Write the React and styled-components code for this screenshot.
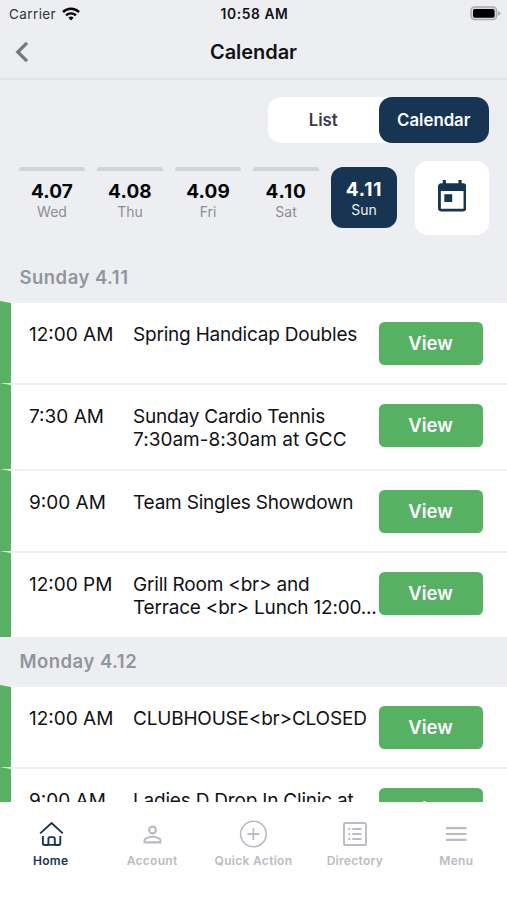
import React from "react";
import styled, { createGlobalStyle } from "styled-components";
import { MdPersonOutline } from "react-icons/md";

const NAVY = "#173453";
const GREEN = "#56b163";
const SURFACE = "#edeef2";
const MUTED = "#b9bcc2";

const GlobalStyle = createGlobalStyle`
  *, *::before, *::after { box-sizing: border-box; }
  body { margin: 0; background: #fff; }
  button { font: inherit; border: 0; padding: 0; cursor: pointer; }
`;

const Screen = styled.div`
  display: flex;
  flex-direction: column;
  width: 507px;
  height: 900px;
  overflow: hidden;
  background: ${SURFACE};
  color: #111214;
  font-family: Inter, "Liberation Sans", sans-serif;
`;

const StatusBar = styled.div`
  display: grid;
  grid-template-columns: 1fr auto 1fr;
  align-items: center;
  height: 27px;
  padding: 0 6px 0 9px;
  flex: none;
`;

const Carrier = styled.div`
  display: flex;
  align-items: center;
  gap: 6px;
  font-size: 13.5px;
  letter-spacing: 0.4px;
  color: #333437;
`;

const Clock = styled.div`
  margin-left: -1px;
  font-size: 13.8px;
  font-weight: 600;
  letter-spacing: 0.6px;
`;

const BatteryIcon = styled.svg`
  justify-self: end;
`;

const TitleBar = styled.header`
  display: grid;
  grid-template-columns: 60px 1fr 60px;
  align-items: center;
  height: 53px;
  padding-bottom: 2px;
  border-bottom: 2px solid #e2e3e6;
  flex: none;
`;

const BackButton = styled.button`
  display: flex;
  align-items: center;
  height: 40px;
  padding-left: 15px;
  background: none;
`;

const Title = styled.h1`
  margin: 0;
  text-align: center;
  font-size: 20px;
  font-weight: 600;
  letter-spacing: -0.05px;
`;

const Filters = styled.section`
  height: 173px;
  padding: 17px 18px 0 19px;
  flex: none;
`;

const Segmented = styled.div`
  display: flex;
  width: 221px;
  height: 46px;
  margin-left: auto;
  border-radius: 13px;
  background: #fff;
`;

const Segment = styled.button`
  flex: 1;
  border-radius: 13px;
  background: ${(p) => (p.$active ? NAVY : "transparent")};
  color: ${(p) => (p.$active ? "#fff" : "#383b42")};
  font-size: 16.8px;
  font-weight: 600;
`;

const DateStrip = styled.div`
  display: flex;
  justify-content: space-between;
  align-items: flex-start;
  margin-top: 18px;
`;

const Days = styled.div`
  display: flex;
  gap: 12px;
  padding-top: 6px;
`;

const Day = styled.button`
  display: flex;
  flex-direction: column;
  align-items: center;
  width: 66px;
  height: 61px;
  padding-top: ${(p) => (p.$active ? "12px" : "10px")};
  border-top: ${(p) => (p.$active ? "0" : "4px solid #d2d3d6")};
  border-radius: ${(p) => (p.$active ? "12px" : "3px 3px 0 0")};
  background: ${(p) => (p.$active ? NAVY : "transparent")};
  color: ${(p) => (p.$active ? "#fff" : "#060607")};
`;

const DayDate = styled.span`
  font-size: 19px;
  line-height: 22px;
  font-weight: 700;
  letter-spacing: ${(p) => (p.$loose ? "0.8px" : "0.15px")};
`;

const DayName = styled.span`
  margin-top: -1px;
  font-size: 14px;
  line-height: 20px;
  color: ${(p) => (p.$active ? "#eef1f5" : "#8c8d92")};
`;

const PickerButton = styled.button`
  display: grid;
  place-items: center;
  width: 74px;
  height: 74px;
  padding-bottom: 4px;
  border-radius: 13px;
  background: #fff;
`;

const Agenda = styled.main`
  height: 549px;
  overflow: hidden;
  flex: none;
`;

const SectionTitle = styled.h2`
  margin: 0;
  height: 48px;
  padding-left: 19.5px;
  font-size: 18.5px;
  font-weight: 600;
  line-height: 48px;
  letter-spacing: 0.48px;
  color: #93959c;
`;

const EventRow = styled.article`
  display: grid;
  grid-template-columns: 104px 245.5px 1fr;
  align-items: start;
  height: ${(p) => (p.$tall ? "86px" : "82px")};
  padding: 18.5px 24px 0 18px;
  border-left: 11px solid ${GREEN};
  border-top: 2px solid #f1f1f3;
  background: #fff;
  background-clip: padding-box;
  font-size: 19px;
  line-height: 23.4px;
`;

const Time = styled.time`
  padding-top: 1px;
  white-space: nowrap;
`;

const EventName = styled.div`
  padding-top: 1px;
`;

const NameLine = styled.span`
  display: block;
  white-space: nowrap;
  letter-spacing: ${(p) => (p.$numeric ? "0.02px" : "-0.2px")};
`;

const ViewButton = styled.button`
  width: 104px;
  height: 43px;
  padding-top: 2px;
  border-radius: 5.5px;
  background: ${GREEN};
  color: #fff;
  font-size: 18.5px;
  font-weight: 600;
`;

const TabBar = styled.nav`
  display: grid;
  grid-template-columns: repeat(5, 1fr);
  height: 98px;
  background: #fff;
  flex: none;
`;

const Tab = styled.a`
  display: flex;
  flex-direction: column;
  align-items: center;
  padding-top: 18px;
  gap: 4px;
  color: ${(p) => (p.$active ? NAVY : MUTED)};
  font-size: 12px;
  font-weight: 600;
  line-height: 18px;
  letter-spacing: 0.3px;
  white-space: nowrap;
`;

const TabIcon = styled.span`
  display: grid;
  place-items: center;
  width: 28px;
  height: 28px;
`;

const LineIcon = ({ children }) => (
  <svg width="28" height="28" viewBox="0 0 28 28" fill="none" stroke="currentColor" strokeWidth="1.6">
    {children}
  </svg>
);

const HomeIcon = () => (
  <LineIcon>
    <path d="M3.2 13.4 14.6 3l11.2 10.4" strokeWidth="1.9" />
    <path
      d="M5.9 16v7.3q0 1.7 1.7 1.7h2.2q1.6 0 1.6-1.6v-4.6q0-1.7 1.7-1.7h3q1.7 0 1.7 1.7v4.6q0 1.6 1.6 1.6h2.2q1.7 0 1.7-1.7v-7.3M11.5 24.9h6.2"
      strokeWidth="1.9"
    />
  </LineIcon>
);

const AddIcon = () => (
  <LineIcon>
    <circle cx="14.4" cy="14" r="12.8" />
    <path d="M14.4 8v12M8.4 14h12" strokeWidth="1.8" />
  </LineIcon>
);

const DirectoryIcon = () => (
  <LineIcon>
    <rect x="3" y="3" width="22" height="22" rx="1" strokeWidth="1.9" />
    <path d="M7.3 9h2M7.3 14h2M7.3 19h2M11.3 9h9.2M11.3 14h9.2M11.3 19h9.2" strokeWidth="1.8" />
  </LineIcon>
);

const MenuIcon = () => (
  <LineIcon>
    <path d="M3.9 8.2h20.6M3.9 14h20.6M3.9 19.8h20.6" strokeWidth="2.2" />
  </LineIcon>
);

const DAYS = [
  ["4.07", "Wed"],
  ["4.08", "Thu"],
  ["4.09", "Fri"],
  ["4.10", "Sat"],
  ["4.11", "Sun"],
];

const SECTIONS = [
  {
    title: "Sunday 4.11",
    events: [
      { time: "12:00 AM", name: ["Spring Handicap Doubles"] },
      { time: "7:30 AM", name: ["Sunday Cardio Tennis", "7:30am-8:30am at GCC"] },
      { time: "9:00 AM", name: ["Team Singles Showdown"] },
      { time: "12:00 PM", name: ["Grill Room <br> and", "Terrace <br> Lunch 12:00..."] },
    ],
  },
  {
    title: "Monday 4.12",
    events: [
      { time: "12:00 AM", name: ["CLUBHOUSE<br>CLOSED"] },
      { time: "9:00 AM", name: ["Ladies D Drop In Clinic at"] },
    ],
  },
];

const TABS = [
  { label: "Home", icon: <HomeIcon /> },
  { label: "Account", icon: <MdPersonOutline size={27} /> },
  { label: "Quick Action", icon: <AddIcon /> },
  { label: "Directory", icon: <DirectoryIcon /> },
  { label: "Menu", icon: <MenuIcon /> },
];

export default function App() {
  return (
    <>
      <GlobalStyle />
      <Screen>
        <StatusBar>
          <Carrier>
            Carrier
            <svg width="18" height="14" viewBox="0 0 18 14" fill="none" stroke="#050505">
              <path d="M1 5.1a11.4 11.4 0 0 1 16 0" strokeWidth="2.5" />
              <path d="M4 8.4a7.2 7.2 0 0 1 10 0" strokeWidth="2.3" />
              <path d="M9 13.4 6.4 10.8a3.7 3.7 0 0 1 5.2 0Z" fill="#050505" stroke="none" />
            </svg>
          </Carrier>
          <Clock>10:58 AM</Clock>
          <BatteryIcon width="31" height="15" viewBox="0 0 31 15">
            <rect x="1" y="1" width="25.6" height="12.6" rx="3.6" fill="#d9dadd" stroke="#aaabad" strokeWidth="1.4" />
            <rect x="3" y="3" width="21.6" height="8.7" rx="1.8" fill="#000" />
            <path d="M28 4.9q2.4.8 2.4 2.4T28 9.7Z" fill="#aaabad" />
          </BatteryIcon>
        </StatusBar>

        <TitleBar>
          <BackButton aria-label="Back">
            <svg width="14" height="22" viewBox="0 0 14 22" fill="none" stroke="#77787b" strokeWidth="3.3">
              <path d="M12 1.8 2.8 11l9.2 9.2" />
            </svg>
          </BackButton>
          <Title>Calendar</Title>
        </TitleBar>

        <Filters>
          <Segmented>
            <Segment>List</Segment>
            <Segment $active>Calendar</Segment>
          </Segmented>
          <DateStrip>
            <Days>
              {DAYS.map(([date, name]) => (
                <Day key={date} $active={date === "4.11"}>
                  <DayDate $loose={date.includes("1")}>{date}</DayDate>
                  <DayName $active={date === "4.11"}>{name}</DayName>
                </Day>
              ))}
            </Days>
            <PickerButton aria-label="Pick a date">
              <svg width="28.4" height="31.5" viewBox="3 1 18 20" fill={NAVY}>
                <path d="M19 3h-1V1h-2v2H8V1H6v2H5c-1.1 0-2 .9-2 2v14c0 1.1.9 2 2 2h14c1.1 0 2-.9 2-2V5c0-1.1-.9-2-2-2Zm.2 16.3H4.8V8h14.4v11.3ZM7 10h5v5H7z" />
              </svg>
            </PickerButton>
          </DateStrip>
        </Filters>

        <Agenda>
          {SECTIONS.map((section) => (
            <section key={section.title}>
              <SectionTitle>{section.title}</SectionTitle>
              {section.events.map((event) => (
                <EventRow key={event.time + event.name[0]} $tall={event.name.length > 1}>
                  <Time>{event.time}</Time>
                  <EventName>
                    {event.name.map((line) => (
                      <NameLine key={line} $numeric={/^\d/.test(line)}>
                        {line}
                      </NameLine>
                    ))}
                  </EventName>
                  <ViewButton>View</ViewButton>
                </EventRow>
              ))}
            </section>
          ))}
        </Agenda>

        <TabBar>
          {TABS.map((tab) => (
            <Tab key={tab.label} $active={tab.label === "Home"}>
              <TabIcon>{tab.icon}</TabIcon>
              {tab.label}
            </Tab>
          ))}
        </TabBar>
      </Screen>
    </>
  );
}
